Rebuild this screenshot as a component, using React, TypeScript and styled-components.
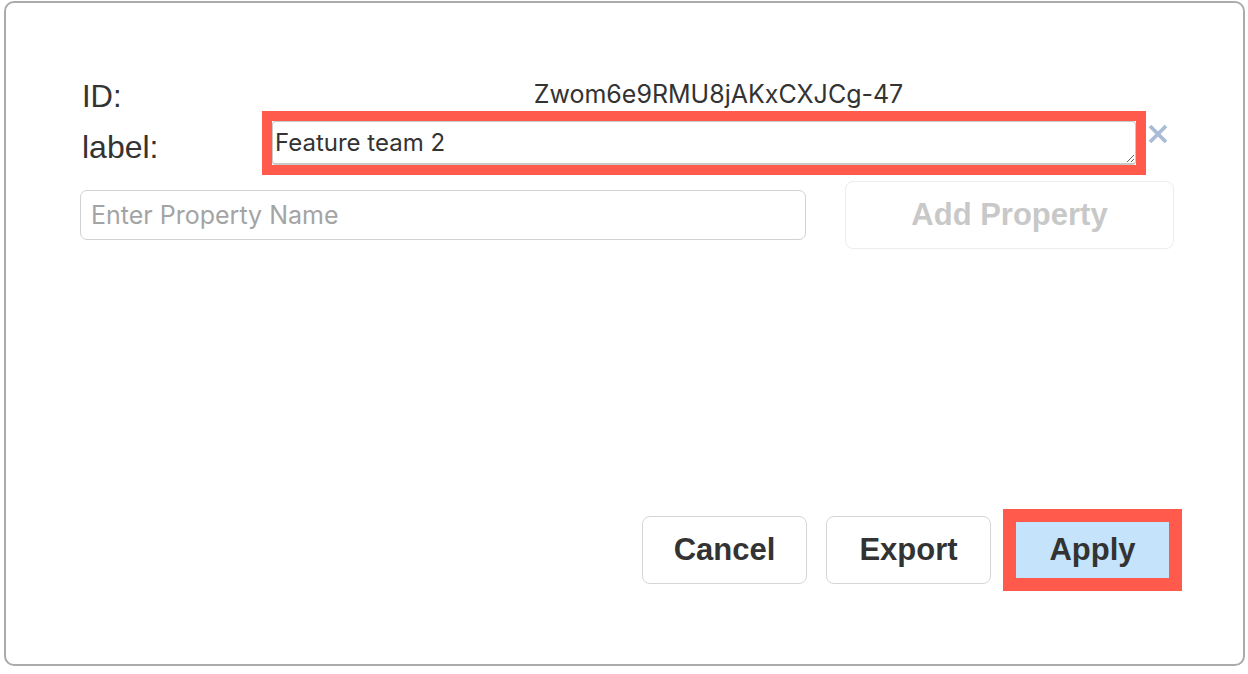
import styled, { createGlobalStyle } from "styled-components";

const GlobalStyle = createGlobalStyle`
  html, body {
    margin: 0;
    padding: 0;
    background: #ffffff;
  }
  body {
    font-family: "Liberation Sans", Arial, sans-serif;
    color: #333333;
  }
`;

const highlight = "#ff5a4c";

export default function App() {
  return (
    <Page>
      <GlobalStyle />
      <Dialog>
        <Body>
          <FieldRow>
            <Label>ID:</Label>
            <IdValue>Zwom6e9RMU8jAKxCXJCg-47</IdValue>
          </FieldRow>
          <FieldRow $gap={8}>
            <Label $offset={4}>label:</Label>
            <ValueCell>
              <Highlight>
                <LabelInput defaultValue="Feature team 2" />
              </Highlight>
              <RemoveIcon aria-label="Remove">
                <svg width="22" height="22" viewBox="0 0 22 22">
                  <path
                    d="M3 3 L19 19 M19 3 L3 19"
                    stroke="#a9bbd6"
                    strokeWidth="3.8"
                    strokeLinecap="butt"
                  />
                </svg>
              </RemoveIcon>
            </ValueCell>
          </FieldRow>
          <AddRow>
            <PropertyInput placeholder="Enter Property Name" />
            <AddButton disabled>Add Property</AddButton>
          </AddRow>
        </Body>
        <Footer>
          <Button>Cancel</Button>
          <Button>Export</Button>
          <Button $primary>Apply</Button>
        </Footer>
      </Dialog>
    </Page>
  );
}

const Page = styled.div`
  padding: 1px 3px 0 4px;
`;

const Dialog = styled.div`
  box-sizing: border-box;
  height: 665px;
  border: 2px solid #ababab;
  border-radius: 10px;
  background: #ffffff;
  padding: 78px 68px 80px 74px;
  display: flex;
  flex-direction: column;
`;

const Body = styled.div`
  flex: 1;
  display: flex;
  flex-direction: column;
`;

const FieldRow = styled.div<{ $gap?: number }>`
  display: grid;
  grid-template-columns: 182px 1fr;
  align-items: start;
  margin-top: ${(p) => p.$gap ?? 0}px;
`;

const Label = styled.div<{ $offset?: number }>`
  padding-left: 2px;
  padding-top: ${(p) => p.$offset ?? 0}px;
  font-size: ${(p) => (p.$offset ? 32 : 31)}px;
  line-height: ${(p) => (p.$offset ? 44 : 32)}px;
  color: #333333;
`;

const IdValue = styled.div`
  margin-top: -3px;
  text-align: center;
  font-family: Inter, "Liberation Sans", sans-serif;
  font-size: 25px;
  line-height: 32px;
  color: #333333;
`;

const ValueCell = styled.div`
  display: flex;
  align-items: flex-start;
  gap: 1px;
  margin-top: -10px;
`;

const Highlight = styled.span`
  display: flex;
  border: 10px solid ${highlight};
`;

const LabelInput = styled.textarea`
  box-sizing: border-box;
  width: 864px;
  height: 44px;
  margin: 0;
  padding: 6px 2px 6px 2px;
  border: 1px solid #c9c9c9;
  border-bottom: 2px solid #c9c9c9;
  border-radius: 4px;
  font-family: Inter, "Liberation Sans", sans-serif;
  font-size: 24px;
  line-height: 29px;
  color: #333333;
  background: #ffffff;
  overflow: hidden;
  outline: none;
`;

const RemoveIcon = styled.span`
  display: flex;
  margin-top: 12px;
  cursor: pointer;
`;

const AddRow = styled.div`
  display: flex;
  align-items: center;
  gap: 39px;
  margin-top: 6px;
`;

const PropertyInput = styled.input`
  box-sizing: border-box;
  width: 726px;
  height: 50px;
  padding: 0 10px;
  border: 1.5px solid #d2d2d2;
  border-radius: 7px;
  font-family: Inter, "Liberation Sans", sans-serif;
  font-size: 25px;
  color: #333333;
  outline: none;

  &::placeholder {
    color: #a4a4a4;
  }
`;

const AddButton = styled.button`
  box-sizing: border-box;
  width: 329px;
  height: 68px;
  border: 1.5px solid #ededed;
  border-radius: 8px;
  background: #ffffff;
  font-family: "Liberation Sans", Arial, sans-serif;
  font-weight: bold;
  font-size: 31px;
  color: #c8c8c8;
`;

const Footer = styled.div`
  display: flex;
  justify-content: flex-end;
  gap: 19px;
`;

const Button = styled.button<{ $primary?: boolean }>`
  box-sizing: border-box;
  width: 165px;
  height: 68px;
  margin: 0;
  border-radius: ${(p) => (p.$primary ? 0 : 8)}px;
  border: ${(p) =>
    p.$primary ? `6px solid ${highlight}` : "1.5px solid #d6d6d6"};
  box-shadow: ${(p) => (p.$primary ? `0 0 0 7px ${highlight}` : "none")};
  background: ${(p) => (p.$primary ? "#c5e4fc" : "#ffffff")};
  font-family: "Liberation Sans", Arial, sans-serif;
  font-weight: bold;
  font-size: 31px;
  color: #333333;
  cursor: pointer;
`;
